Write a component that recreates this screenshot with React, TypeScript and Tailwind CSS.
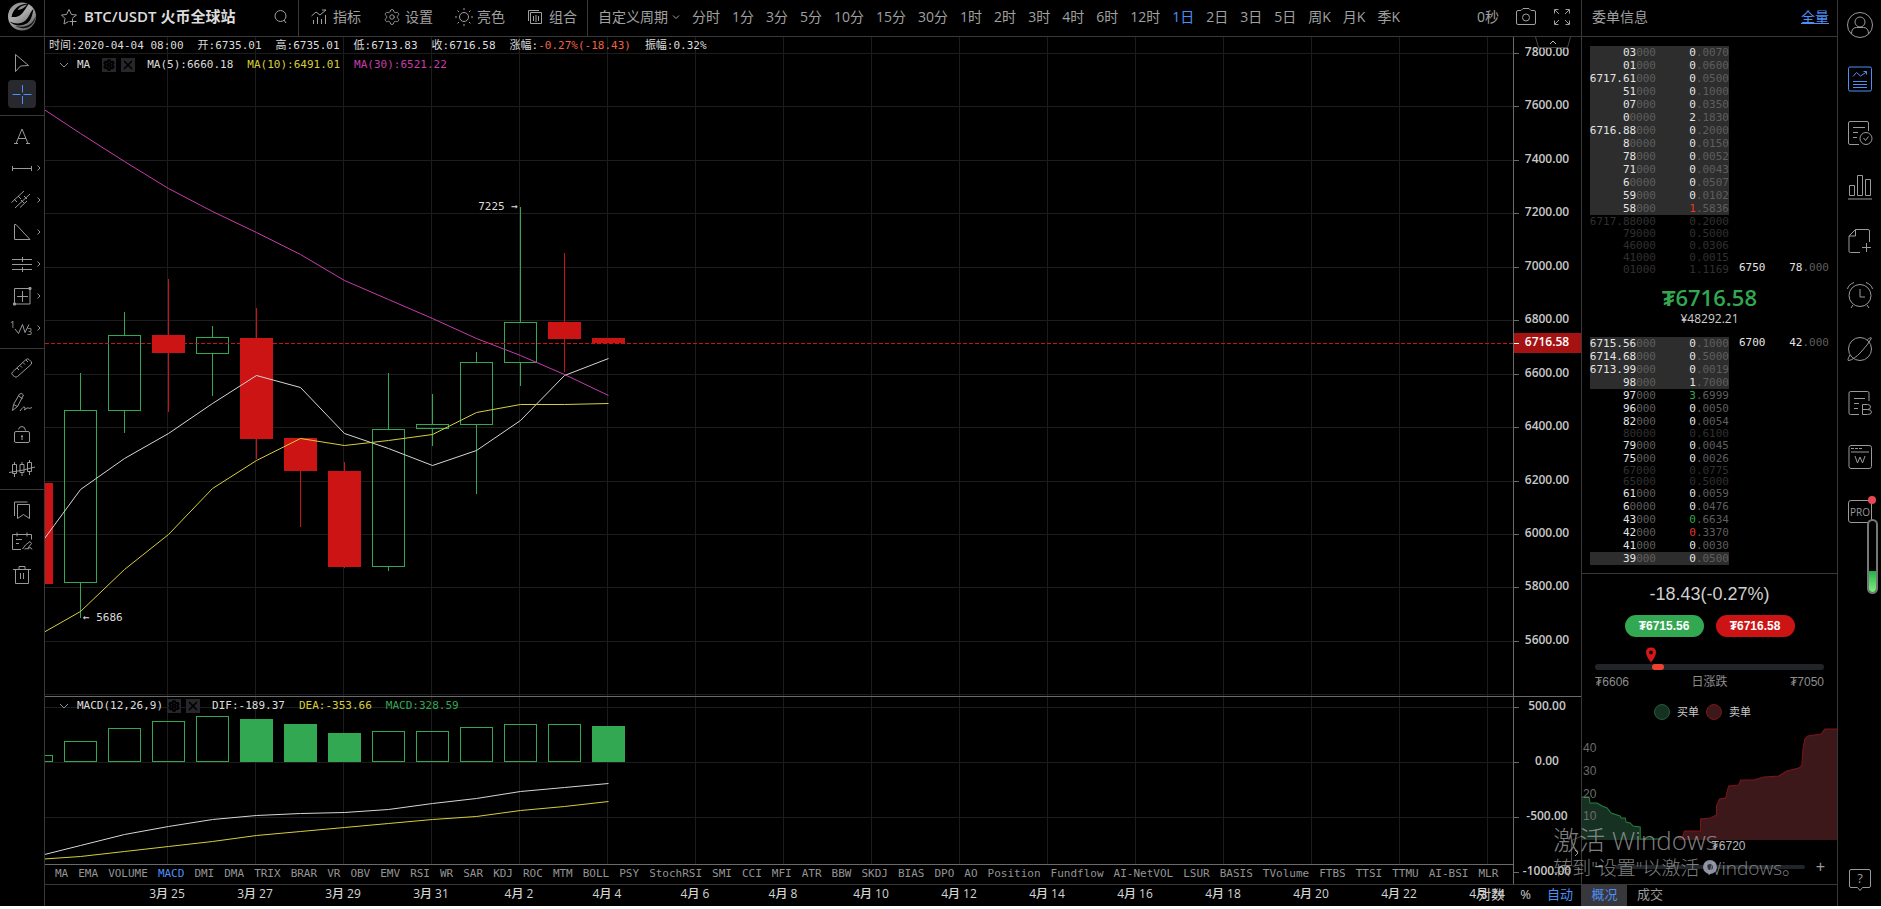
import React from 'react';
import { Settings, X } from 'lucide-react';

type Candle = { open: number; close: number; high: number; low: number };
type BookRow = { price: string; bold: number; amount: string; tone?: 'red' | 'green'; lit?: boolean; fade?: boolean };

// Daily candles, one every 44px, newest last
const candles: Candle[] = [
    { open: 6189, close: 5814, high: 6189, low: 5814 },
    { open: 5821, close: 6464, high: 6601, low: 5686 },
    { open: 6464, close: 6745, high: 6832, low: 6376 },
    { open: 6746, close: 6676, high: 6956, low: 6457 },
    { open: 6678, close: 6738, high: 6780, low: 6515 },
    { open: 6735, close: 6357, high: 6846, low: 6281 },
    { open: 6361, close: 6234, high: 6361, low: 6025 },
    { open: 6237, close: 5878, high: 6271, low: 5872 },
    { open: 5881, close: 6393, high: 6603, low: 5860 },
    { open: 6397, close: 6412, high: 6522, low: 6331 },
    { open: 6411, close: 6644, high: 6681, low: 6151 },
    { open: 6643, close: 6794, high: 7225, low: 6553 },
    { open: 6795, close: 6731, high: 7053, low: 6608 },
    { open: 6735, close: 6714, high: 6735, low: 6714 },
];
const ma5 = [5945, 6169, 6285, 6378, 6489, 6595, 6550, 6378, 6321, 6259, 6315, 6426, 6595, 6660];
const ma10 = [5618, 5712, 5869, 6000, 6171, 6277, 6360, 6333, 6352, 6375, 6457, 6487, 6487, 6491];
const ma30 = [7611, 7501, 7397, 7296, 7209, 7131, 7046, 6951, 6880, 6809, 6734, 6668, 6597, 6521];

const macdBars = [61, 188, 306, 370, 415, 391, 346, 264, 279, 279, 315, 343, 343, 328];
const macdFalling = [5, 6, 7, 13];
const dif = [-853, -757, -657, -582, -515, -479, -461, -457, -425, -375, -330, -266, -230, -189];
const dea = [-878, -857, -812, -766, -715, -666, -624, -594, -557, -521, -488, -439, -397, -354];

const priceTicks = [7800, 7600, 7400, 7200, 7000, 6800, 6600, 6400, 6200, 6000, 5800, 5600];
const dates = ['3月 25', '3月 27', '3月 29', '3月 31', '4月 2', '4月 4', '4月 6', '4月 8', '4月 10', '4月 12', '4月 14', '4月 16', '4月 18', '4月 20', '4月 22', '4月 24'];
const periods = ['分时', '1分', '3分', '5分', '10分', '15分', '30分', '1时', '2时', '3时', '4时', '6时', '12时', '1日', '2日', '3日', '5日', '周K', '月K', '季K'];
const indicators = ['MA', 'EMA', 'VOLUME', 'MACD', 'DMI', 'DMA', 'TRIX', 'BRAR', 'VR', 'OBV', 'EMV', 'RSI', 'WR', 'SAR', 'KDJ', 'ROC', 'MTM', 'BOLL', 'PSY', 'StochRSI', 'SMI', 'CCI', 'MFI', 'ATR', 'BBW', 'SKDJ', 'BIAS', 'DPO', 'AO', 'Position', 'Fundflow', 'AI-NetVOL', 'LSUR', 'BASIS', 'TVolume', 'FTBS', 'TTSI', 'TTMU', 'AI-BSI', 'MLR'];

const asks: BookRow[] = [
    { price: '03000', bold: 2, amount: '0.0070', lit: true },
    { price: '01000', bold: 2, amount: '0.0600', lit: true },
    { price: '6717.61000', bold: 7, amount: '0.0500', lit: true },
    { price: '51000', bold: 2, amount: '0.1000', lit: true },
    { price: '07000', bold: 2, amount: '0.0350', lit: true },
    { price: '00000', bold: 1, amount: '2.1830', lit: true },
    { price: '6716.88000', bold: 7, amount: '0.2000', lit: true },
    { price: '80000', bold: 1, amount: '0.0150', lit: true },
    { price: '78000', bold: 2, amount: '0.0052', lit: true },
    { price: '71000', bold: 2, amount: '0.0043', lit: true },
    { price: '60000', bold: 1, amount: '0.0507', lit: true },
    { price: '59000', bold: 2, amount: '0.0102', lit: true },
    { price: '58000', bold: 2, amount: '1.5836', lit: true, tone: 'red' },
    { price: '6717.88000', bold: 0, amount: '0.2000', fade: true },
    { price: '79000', bold: 0, amount: '0.5000', fade: true },
    { price: '46000', bold: 0, amount: '0.0306', fade: true },
    { price: '41000', bold: 0, amount: '0.0015', fade: true },
    { price: '01000', bold: 0, amount: '1.1169', fade: true },
];
const bids: BookRow[] = [
    { price: '6715.56000', bold: 7, amount: '0.1000', lit: true },
    { price: '6714.68000', bold: 7, amount: '0.5000', lit: true },
    { price: '6713.99000', bold: 7, amount: '0.0019', lit: true },
    { price: '98000', bold: 2, amount: '1.7000', lit: true },
    { price: '97000', bold: 2, amount: '3.6999', tone: 'green' },
    { price: '96000', bold: 2, amount: '0.0050' },
    { price: '82000', bold: 2, amount: '0.0054' },
    { price: '80000', bold: 0, amount: '0.6100', fade: true },
    { price: '79000', bold: 2, amount: '0.0045' },
    { price: '75000', bold: 2, amount: '0.0026' },
    { price: '67000', bold: 0, amount: '0.0775', fade: true },
    { price: '65000', bold: 0, amount: '0.5000', fade: true },
    { price: '61000', bold: 2, amount: '0.0059' },
    { price: '60000', bold: 1, amount: '0.0476' },
    { price: '43000', bold: 2, amount: '0.6634', tone: 'green' },
    { price: '42000', bold: 2, amount: '0.3370', tone: 'red' },
    { price: '41000', bold: 2, amount: '0.0030' },
    { price: '39000', bold: 2, amount: '0.0500', lit: true },
];

const MONO = "font-['DejaVu_Sans_Mono','Noto_Sans_CJK_SC',monospace]";
const SANS = "font-['Open_Sans','Noto_Sans_CJK_SC',sans-serif]";
const ARIAL = "font-['Liberation_Sans','Noto_Sans_CJK_SC',sans-serif]";

const candleX = (i: number) => i * 44 - 9;
const gridX = (i: number) => i * 88 + 122;
const priceY = (p: number) => Math.round(16 + (7800 - p) * 0.2672);
const macdY = (v: number) => Math.round(65 - v * 0.11);
const toPoints = (values: number[], y: (v: number) => number) => values.map((v, i) => `${candleX(i) + 0.5},${y(v) + 0.5}`).join(' ');

const Icon: React.FC<{ size?: number; className?: string; children: React.ReactNode }> = ({ size = 24, className, children }) => (
    <svg width={size} height={size} viewBox={`0 0 ${size} ${size}`} fill="none" stroke="currentColor" strokeWidth="1" className={className}>
        {children}
    </svg>
);

const Logo: React.FC = () => (
    <svg width="28" height="29" viewBox="0 0 28 29">
        <defs>
            <linearGradient id="logo" x1="0" y1="0" x2="0.6" y2="1">
                <stop offset="0" stopColor="#8a8a8a" />
                <stop offset="0.5" stopColor="#adadad" />
                <stop offset="1" stopColor="#6a6a6a" />
            </linearGradient>
        </defs>
        <circle cx="14" cy="14.5" r="14" fill="url(#logo)" />
        <path d="M21 1.500C13 1 5 6 3.500 15c4 .5 8-.5 11-4 2-2.500 4-6 6.500-9.500z" fill="#000" />
        <path d="M19 2.500C15 3 11 5 9.500 8c4-.5 7-2 9.500-5.500z" fill="#8f8f8f" />
        <path d="M25.500 7c-3 2-4 8-8 11.500-4 3.500-10 4-16 1 5 5 13 5 18 1.500 4-3 5-9 6-14z" fill="#000" />
        <path d="M27.500 14c-1 4-4 8-8 9.500-4 1.500-8 1.500-12 .5 4 2.500 10 3 14 .5 3-2 6-6 6-10.500z" fill="#111" />
    </svg>
);

const tools: { label: string; more?: boolean; active?: boolean; height: string; icon: React.ReactNode }[][] = [
    [
        { label: '光标', height: 'h-8', icon: <path d="M5.500 4.500v17l5-5.500 8-.5z" /> },
        { label: '十字线', active: true, height: 'h-8', icon: <path d="M2.500 12.500h8M13.500 12.500h8M12.500 3v7.500M12.500 14v8" /> },
    ],
    [
        { label: '文字', height: 'h-8', icon: <path d="M6 19.500L12 5l6 14.500M8 14.500h8M4 19.500h4M16 19.500h4" /> },
        { label: '线段', more: true, height: 'h-8', icon: <path d="M2.500 12.500h19M2.500 10v5M21.500 10v5" /> },
        { label: '平行线', more: true, height: 'h-8', icon: <path d="M1.500 14.500L14 3M5 20L20 6M10 19.500l7-6.500M4 11l3 3M8 8l3 3M11 12l3 3M14 8l3 3" /> },
        { label: '形状', more: true, height: 'h-8', icon: <path d="M4.500 4.500v15h15.500L6 4.500z" /> },
        { label: '斐波那契', more: true, height: 'h-8', icon: <path d="M2 7.500h20M2 12.500h20M2 17.500h20M12.500 5v5M12.500 15v5" /> },
        { label: '江恩', more: true, height: 'h-8', icon: <><path d="M4.500 4.500h15.500v15.500h-15.500zM7 12.500h11M12.500 7v11" /><path d="M19 3.500h2v2h-2zM3.500 19h2v2h-2z" fill="currentColor" /></> },
        { label: '波浪', more: true, height: 'h-8', icon: <><path d="M5 13l3.500 4.500 4-9 2.500 8 4-8" /><text x="0" y="12" fontSize="9" stroke="none" fill="currentColor">1</text><text x="17" y="19" fontSize="9" stroke="none" fill="currentColor">3</text></> },
    ],
    [
        { label: '测量', height: 'h-[33px]', icon: <path d="M2.500 14L16 1.500q1.500-1.500 3 0l2 2q1.500 1.500 0 3L7.500 18.500q-1.500 1.500-3 0l-2-1.500q-1.500-1.500 0-3zM7 10l2 2M10 7.500l2 2M13 4.500l2 2M16 2l2 2" /> },
        { label: '画笔', height: 'h-[33px]', icon: <path d="M2.500 19.500l1-6L9.500 3q2.500-1.500 4 1l-6 11.500-5 4M8.500 5l4 2.500M3.500 13.500l4 2M10 20q3.500-5 4.500-4t0 3q3-3 4-2t3.500-.5" /> },
        { label: '锁定', height: 'h-[33px]', icon: <path d="M6 7.500h12q1.500 0 1.500 1.500v8q0 1.500-1.500 1.500h-12q-1.500 0-1.500-1.500v-8q0-1.500 1.500-1.500zM8.500 5.500q.5-3 3.500-3t3.500 4M12 11v5M11 12.500h2" /> },
        { label: '隐藏', height: 'h-[33px]', icon: <path d="M2.500 7.500h4v9h-4zM10 7.500h4v8h-4zM17.500 5.500h4v9h-4zM4.500 5v2M4.500 17v3M12 5v2M12 16v3M19.500 3v2M19.500 15v3M-1 15.500Q14 13.500 25 10" /> },
    ],
    [
        { label: '书签', height: 'h-8', icon: <path d="M7.500 6.500h12v14l-6-4-6 4zM4.500 18V4h13" /> },
        { label: '笔记', height: 'h-8', icon: <path d="M11 19.500H2.500v-15h19v5M7 2.500v4M17 2.500v4M6 9.500h6M6 13.500h3M12.500 19l3-4 4.500-3.500 1.500 2-4 5-3 .5M18 19.500q2-4 4 0" /> },
        { label: '删除', height: 'h-[33px]', icon: <path d="M3 6.500h18M5.500 6.500v14h13v-14M9 6V3.500h6V6M10.500 10v6M13.500 10v6" /> },
    ],
];

const sideIcons: { label: string; active?: boolean; icon: React.ReactNode }[] = [
    { label: '账户', icon: <><circle cx="13" cy="13" r="12.500" /><circle cx="13" cy="10" r="5" /><path d="M4.500 22q0-6.500 5-6.500h7q5 0 5 6.500" /></> },
    { label: '委单信息', active: true, icon: <path d="M3 1h20q1.500 0 1.500 1.500v21q0 1.500-1.500 1.500h-20q-1.500 0-1.500-1.500v-21q0-1.500 1.500-1.500zM6 10.500l3.500-4 4 3.500 6-4M16.500 5.500h3v3M6 15.500h14M6 18.500h14M6 21.500h14" /> },
    { label: '订单', icon: <><path d="M12 24.500H3q-1.500 0-1.500-1.500V3q0-1.500 1.500-1.500h17q1.500 0 1.500 1.500v8M6 7.500h12M6 12.500h5M6 17.500h4" /><circle cx="19" cy="18.500" r="6" /><path d="M16.500 18l2 2.500 3-4" /></> },
    { label: '行情', icon: <path d="M1 25h24M2.500 11.500h5v10h-5zM10.500 1.500h5v20h-5zM18.500 5.500h5v16h-5z" /> },
    { label: '新建', icon: <path d="M13 24.500H3.500q-1.500 0-1.500-1.500V8l6.500-6.500H21q1.500 0 1.500 1.500v11M8.500 1.500V8H2M19.500 15v9M15 19.500h9" /> },
    { label: '预警', icon: <><circle cx="13" cy="13.500" r="11" /><path d="M13 7v8h5M.5 7q1-4.500 6.500-6.500M25.500 7q-1-4.500-6.500-6.500M6 23l-2 3M20 23l2 3" /></> },
    { label: '发现', icon: <><circle cx="13" cy="13" r="11.500" /><path d="M3 19q-3.500 6-1 5.500 5-1 12-8.500T24 3q1.500-3-3.500.5" /></> },
    { label: '笔记', icon: <><path d="M12 24.500H3.500q-1.500 0-1.500-1.500V3q0-1.500 1.500-1.500h17q1.500 0 1.500 1.500v8M7 8.500h11M7 13.500h5M7 18.500h4" /><path d="M15.500 14.500h5q3 0 3 2.500t-3 2.500h-5zM20.500 19.500q4 0 4 2.500t-4 2.500h-5v-5" /></> },
    { label: '窗口', icon: <path d="M4 1.500h18q2.500 0 2.500 2v19q0 2-2.500 2h-18q-2 0-2-2v-19q0-2 2-2zM4 4.500h3M8 4.500h3M12 4.500h3M4 8h18M8 12l2.500 7 2.500-6 2.500 6 2.500-7" /> },
    { label: 'PRO', icon: <><path d="M4 2.500h18q2.500 0 2.500 2.500v17q0 2.500-2.500 2.500h-18q-2.500 0-2.500-2.500v-17q0-2.500 2.500-2.500z" /><text x="13" y="18" textAnchor="middle" fontSize="10" stroke="none" fill="currentColor">PRO</text><circle cx="25" cy="2" r="4" fill="#e84855" stroke="none" /></> },
];

const Header: React.FC = () => (
    <header className={`flex h-[37px] shrink-0 items-stretch border-b border-[#383838] text-sm text-[#a0a0a0] ${SANS}`}>
        <div className="flex w-[45px] shrink-0 items-center justify-center border-r border-[#383838] pb-1">
            <Logo />
        </div>
        <div className="flex w-[254px] shrink-0 items-center border-r border-[#383838] pr-2.5 pb-0.5 pl-4">
            <button aria-label="收藏">
                <Icon size={17}><path d="M7.500 12.500L3 15l1-5.500L.5 6l5-.5 2.500-5 2.500 5 5 .5-4 3M11.500 9.500v7M8.500 12.500h7" /></Icon>
            </button>
            <h1 className="ml-1.5 text-[15px] font-semibold whitespace-nowrap text-[#dcdcdc]">BTC/USDT 火币全球站</h1>
            <button aria-label="搜索" className="ml-auto">
                <Icon size={14}><circle cx="6.500" cy="6" r="5.500" /><path d="M10 10l2 3" /></Icon>
            </button>
        </div>
        <div className="flex w-[289px] shrink-0 items-center justify-between border-r border-[#383838] pr-2.5 pb-0.5 pl-3">
            <button className="flex items-center gap-1.5">
                <Icon size={16}><path d="M.5 7L5 3l4 3 6-5M11 1h4M2.500 11v4M6.500 8v7M10.500 10v5M14.500 6v9" /></Icon>指标
            </button>
            <button className="flex items-center gap-1">
                <Settings size={18} strokeWidth={1.2} />设置
            </button>
            <button className="flex items-center gap-1">
                <Icon size={18}><circle cx="9" cy="9" r="4.500" /><path d="M9 0v2M9 16v2M0 9h2M16 9h2M2.500 2.500l1.500 1.500M14 14l1.500 1.500M2.500 15.500L4 14M14 4l1.500-1.500" /></Icon>亮色
            </button>
            <button className="flex items-center gap-1.5">
                <Icon size={16}><path d="M3.500 3.500h11v11h-11zM1.500 12V1.500H12M6.500 7v5M9 6v7M11.500 7v5" /></Icon>组合
            </button>
        </div>
        <nav className="ml-2.5 flex items-center gap-3 pb-0.5 whitespace-nowrap">
            <button className="flex items-center gap-1">
                自定义周期
                <Icon size={8}><path d="M1 2.500l3 3 3-3" /></Icon>
            </button>
            {periods.map(period => (
                <button key={period} className={period === '1日' ? 'text-[#4d8ff5]' : ''}>{period}</button>
            ))}
        </nav>
        <div className="ml-auto flex items-center gap-4 pr-2.5 pb-0.5">
            <button className="whitespace-nowrap">0秒</button>
            <button aria-label="截图">
                <Icon size={22}><path d="M3 4.500h3l2-2h6l2 2h3q1.500 0 1.500 1.500v11q0 1.500-1.500 1.500H3q-1.500 0-1.500-1.500V6Q1.500 4.500 3 4.500z" /><circle cx="11" cy="11.500" r="3.500" /></Icon>
            </button>
            <button aria-label="全屏">
                <Icon size={18}><path d="M1.500 5.500V1.500H5.500M12.500 1.500h4v4M16.500 12.500v4H12.500M5.500 16.500H1.500v-4M2 2l4 4M16 2l-4 4M2 16l4-4M16 16l-4-4" /></Icon>
            </button>
        </div>
    </header>
);

const Toolbar: React.FC = () => (
    <aside className="w-[45px] shrink-0 border-r border-[#383838] pt-[9px] text-[#9a9a9a]">
        {tools.map((group, i) => (
            <div key={i} className={i === 0 ? 'pb-[5px]' : 'border-t border-[#383838] py-1'}>
                {group.map(tool => (
                    <div key={tool.label} className={`flex items-center ${tool.height}`}>
                        <button
                            aria-label={tool.label}
                            className={`ml-2 flex size-7 items-center justify-center rounded ${tool.active ? 'bg-[#28292f] text-[#4d8ff5]' : ''}`}
                        >
                            <Icon size={24} className="overflow-visible">{tool.icon}</Icon>
                        </button>
                        {tool.more && <Icon size={6}><path d="M1.500 0.500l2.500 2.500-2.500 2.500" /></Icon>}
                    </div>
                ))}
            </div>
        ))}
    </aside>
);

const PaneButtons: React.FC = () => (
    <>
        <button aria-label="参数" className="flex size-3.5 items-center justify-center bg-[#26272b] text-black">
            <Settings size={12} strokeWidth={4} />
        </button>
        <button aria-label="关闭" className="flex size-3.5 items-center justify-center bg-[#26272b] text-black">
            <X size={14} strokeWidth={3} />
        </button>
    </>
);

const VerticalGrid: React.FC = () => (
    <>
        {dates.map((date, i) => (
            <rect key={date} x={gridX(i)} y="0" width="1" height="100%" fill="#1c1c1c" />
        ))}
    </>
);

const PricePane: React.FC = () => (
    <section className="relative min-h-0 flex-1 overflow-hidden border-b border-[#6a6a6a]">
        <svg className="absolute inset-0 size-full">
            <VerticalGrid />
            {[...priceTicks, 5400].map(tick => (
                <rect key={tick} x="0" y={priceY(tick)} width="100%" height="1" fill="#1c1c1c" />
            ))}
            {candles.map((c, i) => {
                const up = c.close > c.open;
                const color = up ? '#32a852' : '#cc1414';
                const top = priceY(Math.max(c.open, c.close));
                const bottom = priceY(Math.min(c.open, c.close));
                const x = candleX(i);
                return (
                    <g key={i}>
                        <rect x={x} y={priceY(c.high)} width="1" height={top - priceY(c.high)} fill={color} />
                        <rect x={x} y={bottom} width="1" height={priceY(c.low) - bottom} fill={color} />
                        {up
                            ? <rect x={x - 15.5} y={top + 0.5} width="32" height={bottom - top} fill="none" stroke={color} />
                            : <rect x={x - 16} y={top} width="33" height={bottom - top} fill={color} />}
                    </g>
                );
            })}
            <line x1="0" x2="100%" y1="306.5" y2="306.5" stroke="#cc1414" strokeDasharray="4 2" />
            <g fill="none">
                <polyline points={toPoints(ma5, priceY)} stroke="#d6d6d6" />
                <polyline points={toPoints(ma10, priceY)} stroke="#d8ce3a" />
                <polyline points={toPoints(ma30, priceY)} stroke="#c83cab" />
            </g>
            <g fill="#dcdcdc" fontSize="11" className={MONO}>
                <text x="473" y="173" textAnchor="end">7225 →</text>
                <text x="38" y="584">← 5686</text>
            </g>
        </svg>
        <div className={`relative whitespace-nowrap pl-1 text-[11px] text-[#dcdcdc] ${MONO}`}>
            <div className="flex h-[19px] items-center gap-3.5">
                <span>时间:2020-04-04 08:00</span>
                <span>开:6735.01</span>
                <span>高:6735.01</span>
                <span>低:6713.83</span>
                <span>收:6716.58</span>
                <span>涨幅:<span className="text-[#f0604a]">-0.27%(-18.43)</span></span>
                <span>振幅:0.32%</span>
            </div>
            <div className="flex h-[18px] items-center">
                <Icon size={10} className="mr-2 ml-2.5 text-[#8a8fa5]"><path d="M1 3l4 4 4-4" /></Icon>
                <span className="mr-3">MA</span>
                <span className="mr-3 flex gap-[5px]"><PaneButtons /></span>
                <span className="mr-3.5">MA(5):6660.18</span>
                <span className="mr-3.5 text-[#d8ce3a]">MA(10):6491.01</span>
                <span className="text-[#c83cab]">MA(30):6521.22</span>
            </div>
        </div>
    </section>
);

const MacdPane: React.FC = () => (
    <section className="relative h-[167px] shrink-0 overflow-hidden">
        <svg className="absolute inset-0 size-full">
            <VerticalGrid />
            {[500, 0, -500].map(tick => (
                <rect key={tick} x="0" y={macdY(tick)} width="100%" height="1" fill="#1c1c1c" />
            ))}
            {macdBars.map((v, i) => (
                <rect
                    key={i}
                    x={candleX(i) - 15.5}
                    y={macdY(v) + 0.5}
                    width="32"
                    height={64 - macdY(v)}
                    stroke="#32a852"
                    fill={macdFalling.includes(i) ? '#32a852' : 'none'}
                />
            ))}
            <g fill="none">
                <polyline points={toPoints(dif, macdY)} stroke="#d6d6d6" />
                <polyline points={toPoints(dea, macdY)} stroke="#d8ce3a" />
            </g>
        </svg>
        <div className={`relative flex h-[18px] items-center whitespace-nowrap pl-1 text-[11px] text-[#dcdcdc] ${MONO}`}>
            <Icon size={10} className="mr-2 ml-2.5 text-[#8a8fa5]"><path d="M1 3l4 4 4-4" /></Icon>
            <span className="mr-1">MACD(12,26,9)</span>
            <span className="mr-3 flex gap-[5px]"><PaneButtons /></span>
            <span className="mr-3.5">DIF:-189.37</span>
            <span className="mr-3.5 text-[#d8ce3a]">DEA:-353.66</span>
            <span className="text-[#32a852]">MACD:328.59</span>
        </div>
    </section>
);

const Axis: React.FC = () => (
    <div className="relative flex w-[68px] shrink-0 flex-col border-l border-[#6a6a6a]">
        <svg className={`min-h-0 w-full flex-1 border-b border-[#6a6a6a] text-xs font-semibold ${SANS}`}>
            {priceTicks.map(tick => (
                <g key={tick}>
                    <rect x="0" y={priceY(tick)} width="5" height="1" fill="#6a6a6a" />
                    <text x="33" y={priceY(tick) + 3} textAnchor="middle" fill="#c8c8c8">{tick.toFixed(2)}</text>
                </g>
            ))}
            <rect x="0" y="296" width="68" height="20" fill="#a51212" />
            <rect x="0" y="306" width="5" height="1" fill="#fff" />
            <text x="33" y="309" textAnchor="middle" fill="#fff">6716.58</text>
        </svg>
        <svg className={`h-[187px] w-full shrink-0 text-xs font-semibold ${SANS}`}>
            {[500, 0, -500, -1000].map(tick => (
                <g key={tick}>
                    <rect x="0" y={macdY(tick)} width="5" height="1" fill="#6a6a6a" />
                    <text x="33" y={macdY(tick) + 3} textAnchor="middle" fill="#c8c8c8">{tick.toFixed(2)}</text>
                </g>
            ))}
        </svg>
        <button aria-label="收起顶部" className="absolute top-0 right-2.5 text-[#bbb]">
            <svg width="36" height="11" viewBox="0 0 36 11" fill="none" stroke="currentColor">
                <path d="M.5 0l3 10.500h29l3-10.500" stroke="#444" />
                <path d="M15 7l3-3 3 3" />
            </svg>
        </button>
        <button aria-label="收起侧栏" className="absolute right-0 bottom-3.5 text-[#999]">
            <svg width="10" height="34" viewBox="0 0 10 34" fill="none" stroke="currentColor">
                <path d="M10 .5l-9.500 4v25l9.500 4" stroke="#444" />
                <path d="M4 14l3 3-3 3" />
            </svg>
        </button>
    </div>
);

const BookTable: React.FC<{ label: string; rows: BookRow[]; fadeHeight: string }> = ({ label, rows, fadeHeight }) => (
    <table aria-label={label} className="w-[139px] table-fixed leading-none">
        <tbody>
            {rows.map((row, i) => (
                <tr
                    key={i}
                    className={`${row.fade ? `${fadeHeight} text-[#303030]` : 'h-[13px] text-[#5e5e5e]'} ${row.lit ? 'bg-[#2d2d2d]' : ''}`}
                >
                    <td className="w-[66px] p-0">
                        <div className="flex h-full items-center justify-end">
                            <span className="text-[#e4e4e4]">{row.price.slice(0, row.bold)}</span>
                            <span>{row.price.slice(row.bold)}</span>
                        </div>
                    </td>
                    <td className="p-0">
                        <div className="flex h-full items-center justify-end">
                            <span className={row.fade ? '' : row.tone === 'red' ? 'text-[#e5392c]' : row.tone === 'green' ? 'text-[#32a852]' : 'text-[#e4e4e4]'}>
                                {row.amount[0]}
                            </span>
                            <span>{row.amount.slice(1)}</span>
                        </div>
                    </td>
                </tr>
            ))}
        </tbody>
    </table>
);

const Wall: React.FC<{ price: string; whole: string; rest: string }> = ({ price, whole, rest }) => (
    <div className="flex h-[13px] flex-1 items-center justify-between pr-2 pl-2.5 text-[#e4e4e4]">
        <span>{price}</span>
        <span>{whole}<span className="text-[#5e5e5e]">{rest}</span></span>
    </div>
);

const Depth: React.FC = () => (
    <svg viewBox="0 0 254 112" preserveAspectRatio="none" className={`mt-2 h-28 w-full ${ARIAL}`}>
        <path d="M0 112V69H7L8 75H15L20 78L25 80L29 85L35 87L38 88L39 90H43L44 94L48 95L51 98L58 99V111L79 112z" fill="#163122" />
        <path d="M0 69H7L8 75H15L20 78L25 80L29 85L35 87L38 88L39 90H43L44 94L48 95L51 98L58 99V111L79 111" fill="none" stroke="#23823f" />
        <path d="M96 112V109H100L102 103H118V91L128 90L134 87V78L137 71L143 70L146 58L156 57L158 52H171L181 49L196 48L204 43L216 40L219 37L220 22L222 11L225 8L238 6L242 1H254V112z" fill="#3d181b" />
        <path d="M96 109H100L102 103H118V91L128 90L134 87V78L137 71L143 70L146 58L156 57L158 52H171L181 49L196 48L204 43L216 40L219 37L220 22L222 11L225 8L238 6L242 1H254" fill="none" stroke="#7d1519" />
        <g fill="#6c6c6c" fontSize="12">
            <text x="1" y="24">40</text>
            <text x="1" y="47">30</text>
            <text x="1" y="70">20</text>
            <text x="1" y="92">10</text>
        </g>
    </svg>
);

const OrderPanel: React.FC = () => (
    <section className="flex w-64 shrink-0 flex-col border-l border-[#383838]">
        <div className={`flex h-[37px] shrink-0 items-center justify-between border-b border-[#383838] pr-2 pb-0.5 pl-2.5 text-sm text-[#a0a0a0] ${SANS}`}>
            <h2>委单信息</h2>
            <a href="#all" className="text-[#4d8ff5] underline">全量</a>
        </div>
        <div className={`border-b border-[#383838] px-2 pt-[9px] pb-2 text-[11px] ${MONO}`}>
            <div className="-mr-2 flex items-end">
                <BookTable label="卖单" rows={asks} fadeHeight="h-3" />
                <Wall price="6750" whole="78" rest=".000" />
            </div>
            <div className={`flex h-[62px] flex-col items-center pt-2 ${SANS}`}>
                <p className="text-[22px] leading-7 font-semibold text-[#32a852]">₮6716.58</p>
                <p className="text-xs text-[#cfcfcf]">¥48292.21</p>
            </div>
            <div className="-mr-2 flex items-start">
                <BookTable label="买单" rows={bids} fadeHeight="h-[11px]" />
                <Wall price="6700" whole="42" rest=".000" />
            </div>
        </div>
        <div className={`flex min-h-0 flex-1 flex-col overflow-hidden text-xs ${ARIAL}`}>
            <p className="mt-0.5 mb-0.5 text-center text-lg leading-9 text-[#cfcfcf]">-18.43(-0.27%)</p>
            <div className="flex justify-center gap-3 pt-px font-bold text-white">
                <button className="h-[22px] w-[79px] rounded-full bg-[#32a852]">₮6715.56</button>
                <button className="h-[22px] w-[79px] rounded-full bg-[#cc1414]">₮6716.58</button>
            </div>
            <div className="mx-[13px] mt-2.5">
                <svg width="12" height="16" viewBox="0 0 12 16" className="ml-[50px]">
                    <path d="M6 15.500Q1 9 1 5.500 1 .5 6 .5t5 5Q11 9 6 15.500z" fill="#d81616" />
                    <circle cx="6" cy="5.500" r="2" fill="#111" />
                </svg>
                <div className="mt-px h-1.5 rounded-full bg-[#212529]">
                    <div className="ml-[57px] h-1.5 w-3 rounded-full bg-[#ef4130]" />
                </div>
                <div className="mt-1 flex justify-between text-[#8e8e8e]">
                    <span>₮6606</span>
                    <span>日涨跌</span>
                    <span>₮7050</span>
                </div>
            </div>
            <div className="mt-3.5 flex h-4 items-center justify-center gap-[7px] pr-3.5 text-[11px] text-[#c8c8c8]">
                <span className="size-4 rounded-full border border-[#20603a] bg-[#163122]" />
                <span>买单</span>
                <span className="size-4 rounded-full border border-[#7d1519] bg-[#3d181b]" />
                <span>卖单</span>
            </div>
            <Depth />
            <p className="pl-[38px] text-center leading-3 text-[#b8b8b8]">₮6720</p>
            <div className="flex items-center justify-between px-3 pt-[3px] text-base text-[#9c9c9c]">
                <button aria-label="缩小">−</button>
                <input
                    type="range"
                    aria-label="深度范围"
                    defaultValue="50"
                    className="h-1 w-[190px] appearance-none rounded-full bg-[#212529] [&::-webkit-slider-thumb]:size-3.5 [&::-webkit-slider-thumb]:appearance-none [&::-webkit-slider-thumb]:rounded-full [&::-webkit-slider-thumb]:border-4 [&::-webkit-slider-thumb]:border-[#8b90a3] [&::-webkit-slider-thumb]:bg-[#30333f]"
                />
                <button aria-label="放大">+</button>
            </div>
        </div>
        <div className={`flex h-[22px] shrink-0 border-t border-[#383838] text-[13px] leading-[18px] ${SANS}`}>
            <button className="w-[45px] bg-[#38373c] pb-1 text-[#4d8ff5]">概况</button>
            <button className="px-2.5 pb-1 text-[#9c9c9c]">成交</button>
        </div>
    </section>
);

const SideBar: React.FC = () => (
    <aside className={`relative flex w-11 shrink-0 flex-col items-center border-l border-[#383838] pt-3 pb-3.5 text-[#9a9a9a] ${SANS}`}>
        <div className="flex flex-col gap-7">
            {sideIcons.map(item => (
                <button key={item.label} aria-label={item.label} className={item.active ? 'text-[#4d8ff5]' : ''}>
                    <Icon size={26} className="overflow-visible">{item.icon}</Icon>
                </button>
            ))}
        </div>
        <button aria-label="帮助" className="mt-auto">
            <Icon size={24}>
                <path d="M3 1.500h18q1.500 0 1.500 1.500v15q0 1.500-1.500 1.500h-6.500l-2.500 3-2.500-3H3q-1.500 0-1.500-1.500V3q0-1.500 1.500-1.500z" />
                <text x="12" y="15" textAnchor="middle" fontSize="13" stroke="none" fill="currentColor">?</text>
            </Icon>
        </button>
        <div className="absolute top-[519px] right-[3px] flex h-[75px] w-[11px] items-end rounded-full border-2 border-[#777] bg-black">
            <div className="h-[21px] w-full rounded-b-full bg-gradient-to-b from-[#1fae4f] to-[#7df07d]" />
        </div>
    </aside>
);

const App: React.FC = () => (
    <div className="relative flex h-[calc(100vh-3px)] overflow-hidden bg-black">
        <main className="flex min-w-0 flex-1 flex-col">
            <Header />
            <div className="flex min-h-0 flex-1">
                <Toolbar />
                <div className="flex min-w-0 flex-1 flex-col">
                    <div className="flex min-h-0 flex-1">
                        <div className="flex min-w-0 flex-1 flex-col">
                            <PricePane />
                            <MacdPane />
                            <nav className={`flex h-5 shrink-0 items-center gap-2.5 overflow-hidden border-t border-[#6a6a6a] pl-2.5 text-[11px] whitespace-nowrap text-[#949494] ${MONO}`}>
                                {indicators.map(name => (
                                    <button key={name} className={name === 'MACD' ? 'text-[#4d8ff5]' : ''}>{name}</button>
                                ))}
                            </nav>
                        </div>
                        <Axis />
                    </div>
                    <footer className={`relative h-[22px] shrink-0 border-t border-[#383838] ${SANS}`}>
                        <svg className="size-full text-xs font-medium">
                            {dates.map((date, i) => (
                                <text key={date} x={gridX(i)} y="13" textAnchor="middle" fill="#d4d4d4">{date}</text>
                            ))}
                        </svg>
                        <div className="absolute inset-y-0 right-2 flex items-center gap-4 pb-1 text-[13px] leading-[18px] text-[#c8c8c8]">
                            <button>对数</button>
                            <button>%</button>
                            <button className="text-[#4d8ff5]">自动</button>
                        </div>
                    </footer>
                </div>
            </div>
        </main>
        <OrderPanel />
        <SideBar />
        <div className={`pointer-events-none absolute right-20 bottom-[26px] font-light whitespace-nowrap text-[#a0a0a0]/80 ${SANS}`}>
            <p className="text-[26px] leading-8">激活 Windows</p>
            <p className="text-[19px] leading-6">转到"设置"以激活 Windows。</p>
        </div>
    </div>
);

export default App;
